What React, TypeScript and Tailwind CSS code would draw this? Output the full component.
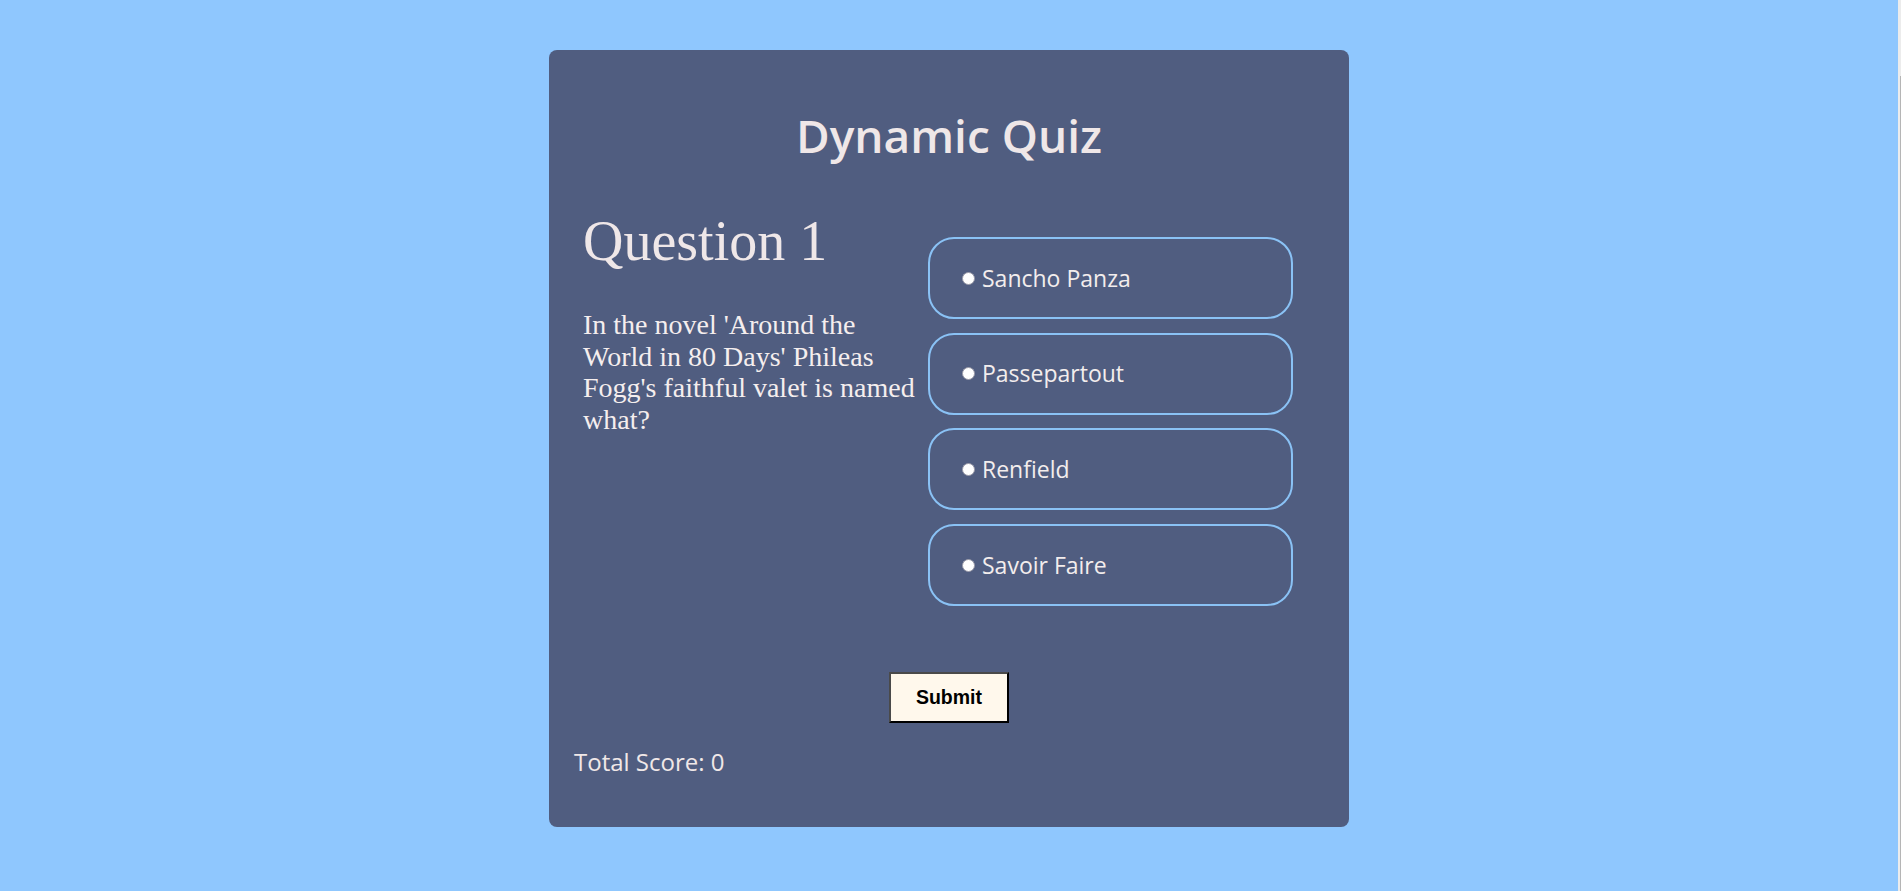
const options = ["Sancho Panza", "Passepartout", "Renfield", "Savoir Faire"];

function Option({ label }: { label: string }) {
  return (
    <div className="flex h-[82px] items-center rounded-[26px] border-2 border-[#8ac2f5] pl-[32px]">
      <span className="h-[13px] w-[13px] rounded-full border border-[#9a9aa8] bg-white" />
      <span className="ml-[7px] text-[23px] leading-none text-[#f3eded] [font-family:'Open_Sans',sans-serif]">
        {label}
      </span>
    </div>
  );
}

export default function App() {
  return (
    <div className="flex min-h-[891px] w-full bg-[#8fc7fe]">
      <main className="flex flex-1 justify-center pt-[50px]">
        <div className="h-[777px] w-[800px] rounded-lg bg-[#505d80] px-[25px] pt-[62px]">
          <h1 className="text-center text-[46px] font-semibold leading-none text-[#efe7e8] [font-family:'Open_Sans',sans-serif]">
            Dynamic Quiz
          </h1>

          <div className="mt-[55px] flex pl-[9px]">
            <div className="w-[345px]">
              <h2 className="text-[56px] leading-none text-[#efe7e8] [font-family:'Liberation_Serif',serif]">
                Question 1
              </h2>
              <p className="mt-[40px] w-[340px] text-[28px] leading-[31.5px] text-[#f5eeee] [font-family:'Liberation_Serif',serif]">
                In the novel 'Around the World in 80 Days' Phileas Fogg's faithful valet is named what?
              </p>
            </div>
            <div className="flex w-[365px] flex-col gap-[13.7px] pt-[24px]">
              {options.map((o) => (
                <Option key={o} label={o} />
              ))}
            </div>
          </div>

          <div className="mt-[66px] flex justify-center">
            <button className="flex h-[51px] w-[120px] items-center justify-center border-2 border-t-[#4a4a4a] border-l-[#4a4a4a] border-b-black border-r-black bg-[#fff8ec] text-[19.5px] font-bold text-black [font-family:'Liberation_Sans',sans-serif]">
              Submit
            </button>
          </div>

          <p className="mt-[27px] text-[24px] leading-none text-[#f0e8e8] [font-family:'Open_Sans',sans-serif]">
            Total Score: 0
          </p>
        </div>
      </main>
      <div className="flex w-[3px] justify-end bg-[#ececec] pt-[76px]">
        <div className="w-px bg-[#b5b5b5]" />
      </div>
    </div>
  );
}
